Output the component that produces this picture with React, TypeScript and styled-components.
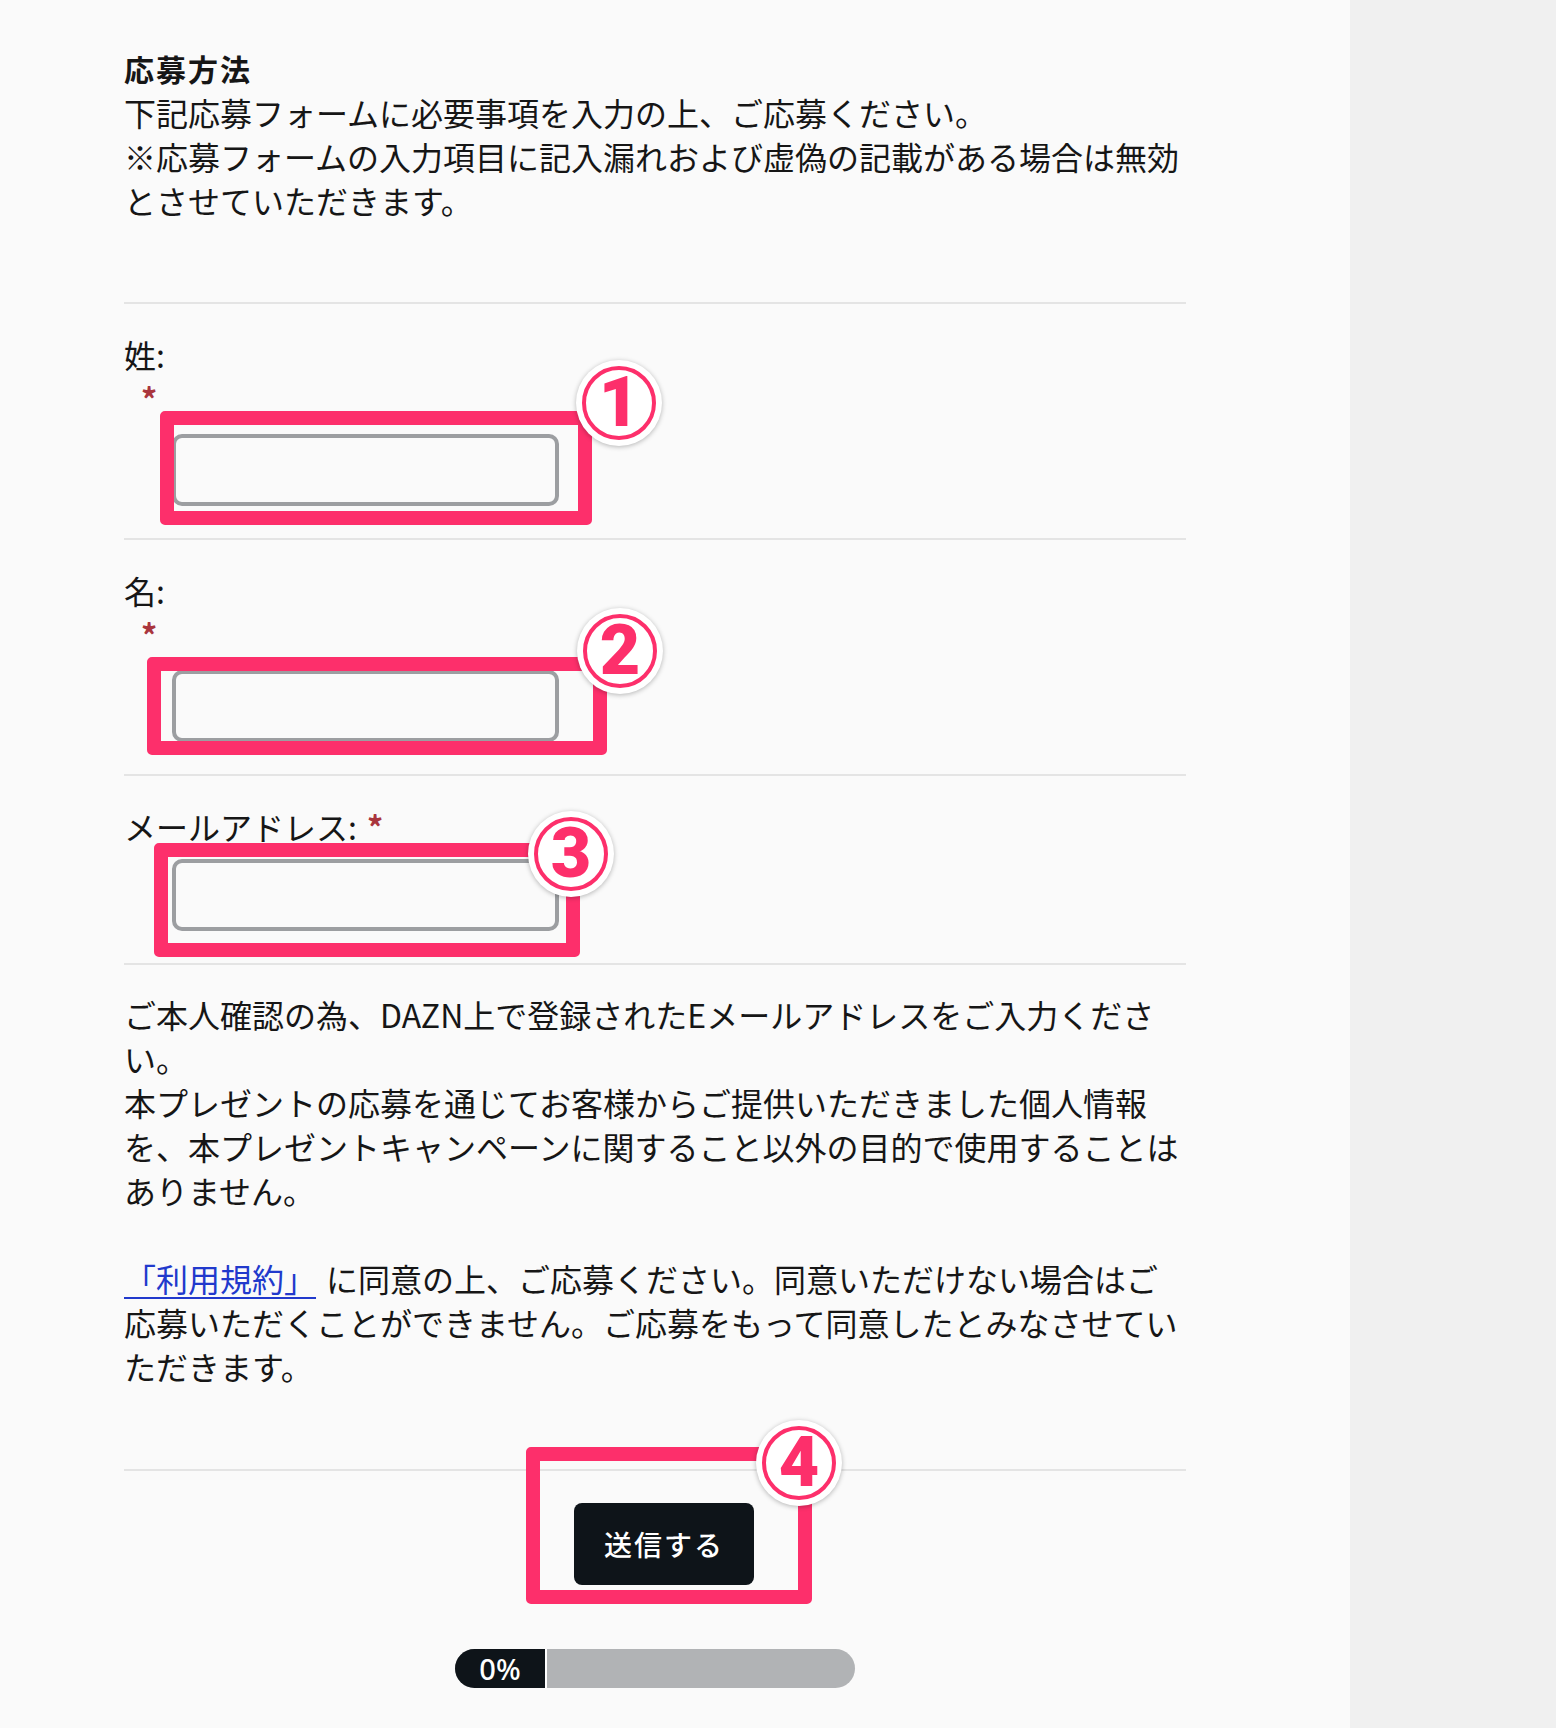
import React from "react";
import styled, { createGlobalStyle } from "styled-components";

const GlobalStyle = createGlobalStyle`
  html, body { margin: 0; padding: 0; }
  body {
    background: #fafafa;
    color: #161616;
    font-family: "Noto Sans CJK JP", "Noto Sans", sans-serif;
  }
`;

const PINK = "#fd2f6b";

const Page = styled.div`
  display: flex;
  min-height: 1728px;
`;

const Main = styled.main`
  flex: none;
  width: 1350px;
  box-sizing: border-box;
  padding: 0 164px 0 124px;
  background: #fafafa;
`;

const Side = styled.aside`
  flex: 1;
  background: #f0f0f0;
`;

const Section = styled.section<{ $pt: number; $pb: number }>`
  padding: ${(p) => p.$pt}px 0 ${(p) => p.$pb}px;
  & + & {
    border-top: 2px solid #e4e4e4;
  }
`;

const Title = styled.h2`
  margin: 0;
  font-size: 30px;
  font-weight: 700;
  line-height: 44px;
  letter-spacing: 2px;
`;

const Text = styled.p<{ $gap?: number }>`
  margin: ${(p) => p.$gap ?? 0}px 0 0;
  font-size: 32px;
  line-height: 44px;
  font-weight: 400;
`;

const TermsLink = styled.a`
  color: #2139cc;
  text-decoration: underline;
  text-decoration-thickness: 2px;
  text-underline-offset: 5px;
  margin-right: 10px;
`;

const Label = styled.label`
  display: block;
  height: 44px;
  font-size: 32px;
  line-height: 44px;
`;

const Required = styled.span<{ $block?: boolean }>`
  display: ${(p) => (p.$block ? "block" : "inline")};
  padding-left: ${(p) => (p.$block ? 17 : 10)}px;
  color: #a9353d;
  font-size: 32px;
  font-weight: 700;
  line-height: 44px;
  vertical-align: top;
`;

const Anchor = styled.div<{ $mt: number }>`
  position: relative;
  width: 387px;
  margin: ${(p) => p.$mt}px 0 0 48px;
`;

const TextInput = styled.input`
  display: block;
  width: 387px;
  height: 72px;
  box-sizing: border-box;
  border: 4px solid #9c9ea1;
  border-radius: 10px;
  background: #fafafa;
  font-size: 28px;
  padding: 0 14px;
  outline: none;
`;

const Frame = styled.div<{ $t: number; $r: number; $b: number; $l: number }>`
  position: absolute;
  top: ${(p) => p.$t}px;
  right: ${(p) => p.$r}px;
  bottom: ${(p) => p.$b}px;
  left: ${(p) => p.$l}px;
  border: 14px solid ${PINK};
  border-radius: 5px;
  pointer-events: none;
`;

const Badge = styled.div<{ $x: number; $y: number }>`
  position: absolute;
  left: ${(p) => p.$x - 43}px;
  top: ${(p) => p.$y - 43}px;
  width: 86px;
  height: 86px;
  border-radius: 50%;
  background: #ffffff;
  box-shadow: 0 1px 5px rgba(0, 0, 0, 0.28);
  display: flex;
  align-items: center;
  justify-content: center;
  pointer-events: none;
`;

const Ring = styled.div`
  width: 74px;
  height: 74px;
  box-sizing: border-box;
  border: 4px solid ${PINK};
  border-radius: 50%;
  display: flex;
  align-items: center;
  justify-content: center;
  color: ${PINK};
  font-family: Roboto, "Liberation Sans", sans-serif;
  font-weight: 900;
  font-size: 70px;
  line-height: 1;
  padding-bottom: 2px;
`;

const SubmitRow = styled.div`
  display: flex;
  justify-content: center;
  padding-left: 18px;
`;

const ButtonAnchor = styled.div`
  position: relative;
`;

const SubmitButton = styled.button`
  display: block;
  width: 180px;
  height: 82px;
  border: none;
  border-radius: 8px;
  background: #0e1419;
  color: #ffffff;
  font-family: "Noto Sans CJK JP", "Noto Sans", sans-serif;
  font-size: 28px;
  font-weight: 500;
  letter-spacing: 2px;
  cursor: pointer;
`;

const ProgressRow = styled.div`
  display: flex;
  justify-content: center;
  margin-top: 64px;
`;

const Progress = styled.div`
  display: flex;
  width: 400px;
  height: 39px;
  border-radius: 20px;
  background: #b1b3b5;
  overflow: hidden;
`;

const ProgressFill = styled.div`
  flex: none;
  box-sizing: border-box;
  border-right: 2px solid #ffffff;
  background: #0e1419;
  color: #ffffff;
  display: flex;
  align-items: center;
  justify-content: center;
  font-family: "Noto Sans", sans-serif;
  font-size: 29px;
  font-weight: 500;
`;

type Ann = {
  n: string;
  frame: [number, number, number, number];
  badge: [number, number];
};

const Annotation: React.FC<Ann> = ({ n, frame, badge }) => (
  <>
    <Frame $t={frame[0]} $r={frame[1]} $b={frame[2]} $l={frame[3]} />
    <Badge $x={badge[0]} $y={badge[1]}>
      <Ring>{n}</Ring>
    </Badge>
  </>
);

const Field: React.FC<{
  label: string;
  inlineRequired?: boolean;
  mt: number;
  ann: Ann;
}> = ({ label, inlineRequired, mt, ann }) => (
  <Section $pt={28} $pb={32}>
    <Label>
      {label}
      {inlineRequired && <Required>*</Required>}
    </Label>
    {!inlineRequired && <Required $block>*</Required>}
    <Anchor $mt={mt}>
      <TextInput type="text" />
      <Annotation {...ann} />
    </Anchor>
  </Section>
);

export default function App() {
  const progress = 0;
  return (
    <>
      <GlobalStyle />
      <Page>
        <Main>
          <Section $pt={46} $pb={80}>
            <Title>応募方法</Title>
            <Text>
              下記応募フォームに必要事項を入力の上、ご応募ください。
              <br />
              ※応募フォームの入力項目に記入漏れおよび虚偽の記載がある場合は無効
              <br />
              とさせていただきます。
            </Text>
          </Section>

          <Field
            label="姓:"
            mt={14}
            ann={{ n: "1", frame: [-23, -33, -19, -12], badge: [447, -31] }}
          />
          <Field
            label="名:"
            mt={14}
            ann={{ n: "2", frame: [-13, -48, -13, -25], badge: [448, -19] }}
          />
          <Field
            label="メールアドレス:"
            inlineRequired
            mt={11}
            ann={{ n: "3", frame: [-16, -21, -26, -18], badge: [399, -5] }}
          />

          <Section $pt={27} $pb={81}>
            <Text>
              ご本人確認の為、DAZN上で登録されたEメールアドレスをご入力くださ
              <br />
              い。
              <br />
              本プレゼントの応募を通じてお客様からご提供いただきました個人情報
              <br />
              を、本プレゼントキャンペーンに関すること以外の目的で使用することは
              <br />
              ありません。
            </Text>
            <Text $gap={44}>
              <TermsLink href="#">「利用規約」</TermsLink>
              に同意の上、ご応募ください。同意いただけない場合はご
              <br />
              応募いただくことができません。ご応募をもって同意したとみなさせてい
              <br />
              ただきます。
            </Text>
          </Section>

          <Section $pt={32} $pb={38}>
            <SubmitRow>
              <ButtonAnchor>
                <SubmitButton type="button">送信する</SubmitButton>
                <Annotation n="4" frame={[-56, -58, -19, -48]} badge={[225, -40]} />
              </ButtonAnchor>
            </SubmitRow>
            <ProgressRow>
              <Progress>
                <ProgressFill style={{ width: 92 + progress * 3.08 }}>{progress}%</ProgressFill>
              </Progress>
            </ProgressRow>
          </Section>
        </Main>
        <Side />
      </Page>
    </>
  );
}
